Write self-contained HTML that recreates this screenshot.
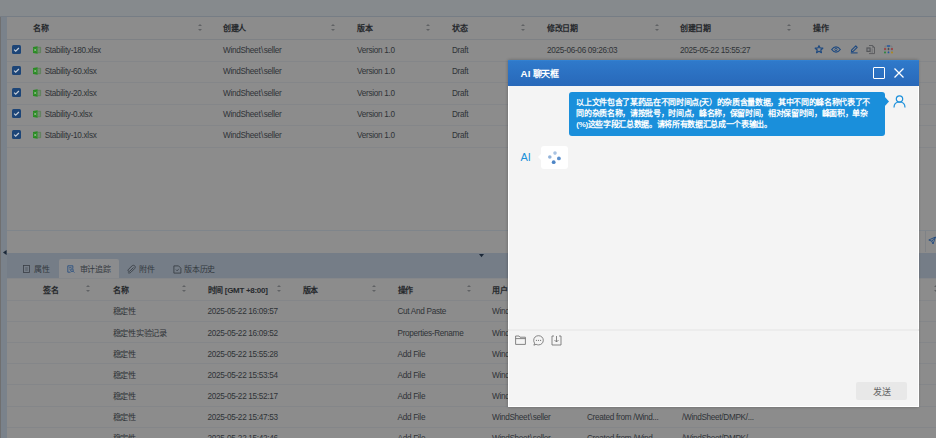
<!DOCTYPE html>
<html lang="zh-CN"><head><meta charset="utf-8">
<style>
*{box-sizing:border-box;margin:0;padding:0}
html,body{width:936px;height:438px;overflow:hidden;background:#8a8c8e;font-family:"Liberation Sans",sans-serif}
.a{position:absolute;white-space:nowrap}
svg.a{overflow:visible}
#page{position:absolute;left:0;top:0;width:936px;height:438px}
.hd{font-size:8px;font-weight:bold;color:#26292d;line-height:10px;letter-spacing:-0.3px}
.td{font-size:8.2px;color:#2f3337;line-height:10px;letter-spacing:-0.3px}
.tb{font-size:8px;color:#33383e;line-height:10px;letter-spacing:-0.35px}
.hl{position:absolute;height:1px;background:#848689}
.sort{position:absolute;width:5px;height:6.9px}
.sort:before,.sort:after{content:"";position:absolute;left:0.3px;border-left:2.2px solid transparent;border-right:2.2px solid transparent}
.sort:before{top:0;border-bottom:2.9px solid #606265}
.sort:after{bottom:0;border-top:2.9px solid #606265}
.cb{position:absolute;width:9px;height:9px;background:#1d4577;border-radius:1.5px}
.cb svg{position:absolute;left:0;top:0}
</style></head><body>
<div id="page">
<div class="a" style="left:0;top:0;width:936px;height:16px;background:#868a8d"></div>
<div class="a" style="left:0;top:16px;width:7px;height:422px;background:#7a828b"></div>
<div class="a" style="left:0;top:17px;width:1.2px;height:421px;background:#6f6f70"></div>
<div class="a" style="left:7px;top:16px;width:929px;height:237px;background:#8c8c8c"></div>
<div class="a" style="left:0;top:15.6px;width:936px;height:1.5px;background:#767d85"></div>
<div class="hl" style="left:7px;top:39px;width:929px;background:#7e8185;"></div>
<div class="hl" style="left:7px;top:61px;width:929px;"></div>
<div class="hl" style="left:7px;top:82px;width:929px;"></div>
<div class="hl" style="left:7px;top:104px;width:929px;"></div>
<div class="hl" style="left:7px;top:125px;width:929px;"></div>
<div class="hl" style="left:7px;top:147px;width:929px;"></div>
<div class="hl" style="left:7px;top:230px;width:929px;background:#7f858b;"></div>
<div class="a hd" style="left:33px;top:24.1px;">名称</div>
<div class="a hd" style="left:223px;top:24.1px;">创建人</div>
<div class="a hd" style="left:357px;top:24.1px;">版本</div>
<div class="a hd" style="left:452px;top:24.1px;">状态</div>
<div class="a hd" style="left:547px;top:24.1px;">修改日期</div>
<div class="a hd" style="left:680px;top:24.1px;">创建日期</div>
<div class="a hd" style="left:813px;top:24.1px;">操作</div>
<div class="sort" style="left:197.3px;top:24.1px"></div>
<div class="sort" style="left:330.8px;top:24.1px"></div>
<div class="sort" style="left:425.5px;top:24.1px"></div>
<div class="sort" style="left:520.3px;top:24.1px"></div>
<div class="sort" style="left:654.5px;top:24.1px"></div>
<div class="sort" style="left:787px;top:24.1px"></div>
<div class="cb" style="left:12.3px;top:45px"><svg width="9" height="9" viewBox="0 0 9 9"><path d="M2.1 4.6 L3.7 6.1 L6.9 3" fill="none" stroke="#c3cbd5" stroke-width="1.25"/></svg></div>
<svg class="a" style="left:33px;top:46px" width="8" height="8" viewBox="0 0 8 8"><path d="M4.5 1.3 H7.6 V6.7 H4.5" fill="none" stroke="#4f7f49" stroke-width="0.7"/><path d="M5.6 1.3 V6.7 M6.6 1.3 V6.7" stroke="#5f8a59" stroke-width="0.5"/><path d="M0 1 L4.6 0.2 L4.6 7.8 L0 7 Z" fill="#2a8a24"/><path d="M1.2 2.8 L3.3 5.2 M3.3 2.8 L1.2 5.2" stroke="#a8cfa4" stroke-width="0.7"/></svg>
<div class="a td" style="left:44.7px;top:45.9px;">Stability-180.xlsx</div>
<div class="a td" style="left:223px;top:45.9px;">WindShee<span style="letter-spacing:0.4px">t\</span>seller</div>
<div class="a td" style="left:357px;top:45.9px;">Version 1.0</div>
<div class="a td" style="left:452px;top:45.9px;">Draft</div>
<div class="a td" style="left:547px;top:45.9px;">2025-06-06 09:26:03</div>
<div class="a td" style="left:680px;top:45.9px;">2025-05-22 15:55:27</div>
<div class="cb" style="left:12.3px;top:66.3px"><svg width="9" height="9" viewBox="0 0 9 9"><path d="M2.1 4.6 L3.7 6.1 L6.9 3" fill="none" stroke="#c3cbd5" stroke-width="1.25"/></svg></div>
<svg class="a" style="left:33px;top:67.3px" width="8" height="8" viewBox="0 0 8 8"><path d="M4.5 1.3 H7.6 V6.7 H4.5" fill="none" stroke="#4f7f49" stroke-width="0.7"/><path d="M5.6 1.3 V6.7 M6.6 1.3 V6.7" stroke="#5f8a59" stroke-width="0.5"/><path d="M0 1 L4.6 0.2 L4.6 7.8 L0 7 Z" fill="#2a8a24"/><path d="M1.2 2.8 L3.3 5.2 M3.3 2.8 L1.2 5.2" stroke="#a8cfa4" stroke-width="0.7"/></svg>
<div class="a td" style="left:44.7px;top:67.2px;">Stability-60.xlsx</div>
<div class="a td" style="left:223px;top:67.2px;">WindShee<span style="letter-spacing:0.4px">t\</span>seller</div>
<div class="a td" style="left:357px;top:67.2px;">Version 1.0</div>
<div class="a td" style="left:452px;top:67.2px;">Draft</div>
<div class="cb" style="left:12.3px;top:87.6px"><svg width="9" height="9" viewBox="0 0 9 9"><path d="M2.1 4.6 L3.7 6.1 L6.9 3" fill="none" stroke="#c3cbd5" stroke-width="1.25"/></svg></div>
<svg class="a" style="left:33px;top:88.6px" width="8" height="8" viewBox="0 0 8 8"><path d="M4.5 1.3 H7.6 V6.7 H4.5" fill="none" stroke="#4f7f49" stroke-width="0.7"/><path d="M5.6 1.3 V6.7 M6.6 1.3 V6.7" stroke="#5f8a59" stroke-width="0.5"/><path d="M0 1 L4.6 0.2 L4.6 7.8 L0 7 Z" fill="#2a8a24"/><path d="M1.2 2.8 L3.3 5.2 M3.3 2.8 L1.2 5.2" stroke="#a8cfa4" stroke-width="0.7"/></svg>
<div class="a td" style="left:44.7px;top:88.5px;">Stability-20.xlsx</div>
<div class="a td" style="left:223px;top:88.5px;">WindShee<span style="letter-spacing:0.4px">t\</span>seller</div>
<div class="a td" style="left:357px;top:88.5px;">Version 1.0</div>
<div class="a td" style="left:452px;top:88.5px;">Draft</div>
<div class="cb" style="left:12.3px;top:109px"><svg width="9" height="9" viewBox="0 0 9 9"><path d="M2.1 4.6 L3.7 6.1 L6.9 3" fill="none" stroke="#c3cbd5" stroke-width="1.25"/></svg></div>
<svg class="a" style="left:33px;top:110px" width="8" height="8" viewBox="0 0 8 8"><path d="M4.5 1.3 H7.6 V6.7 H4.5" fill="none" stroke="#4f7f49" stroke-width="0.7"/><path d="M5.6 1.3 V6.7 M6.6 1.3 V6.7" stroke="#5f8a59" stroke-width="0.5"/><path d="M0 1 L4.6 0.2 L4.6 7.8 L0 7 Z" fill="#2a8a24"/><path d="M1.2 2.8 L3.3 5.2 M3.3 2.8 L1.2 5.2" stroke="#a8cfa4" stroke-width="0.7"/></svg>
<div class="a td" style="left:44.7px;top:109.9px;">Stability-0.xlsx</div>
<div class="a td" style="left:223px;top:109.9px;">WindShee<span style="letter-spacing:0.4px">t\</span>seller</div>
<div class="a td" style="left:357px;top:109.9px;">Version 1.0</div>
<div class="a td" style="left:452px;top:109.9px;">Draft</div>
<div class="cb" style="left:12.3px;top:130.3px"><svg width="9" height="9" viewBox="0 0 9 9"><path d="M2.1 4.6 L3.7 6.1 L6.9 3" fill="none" stroke="#c3cbd5" stroke-width="1.25"/></svg></div>
<svg class="a" style="left:33px;top:131.3px" width="8" height="8" viewBox="0 0 8 8"><path d="M4.5 1.3 H7.6 V6.7 H4.5" fill="none" stroke="#4f7f49" stroke-width="0.7"/><path d="M5.6 1.3 V6.7 M6.6 1.3 V6.7" stroke="#5f8a59" stroke-width="0.5"/><path d="M0 1 L4.6 0.2 L4.6 7.8 L0 7 Z" fill="#2a8a24"/><path d="M1.2 2.8 L3.3 5.2 M3.3 2.8 L1.2 5.2" stroke="#a8cfa4" stroke-width="0.7"/></svg>
<div class="a td" style="left:44.7px;top:131.2px;">Stability-10.xlsx</div>
<div class="a td" style="left:223px;top:131.2px;">WindShee<span style="letter-spacing:0.4px">t\</span>seller</div>
<div class="a td" style="left:357px;top:131.2px;">Version 1.0</div>
<div class="a td" style="left:452px;top:131.2px;">Draft</div>
<svg class="a" style="left:813.5px;top:45px" width="10" height="8.5" viewBox="0 0 10 8.5"><path d="M5 0.7 L6.1 3 L8.8 3.2 L6.8 4.9 L7.4 7.7 L5 6.3 L2.6 7.7 L3.2 4.9 L1.2 3.2 L3.9 3 Z" fill="none" stroke="#1f4a80" stroke-width="1.25" stroke-linejoin="round"/></svg>
<svg class="a" style="left:831.3px;top:45.8px" width="10" height="7" viewBox="0 0 10 7"><path d="M0.7 3.5 C2.2 1.4 3.6 0.8 5 0.8 C6.4 0.8 7.8 1.4 9.3 3.5 C7.8 5.6 6.4 6.2 5 6.2 C3.6 6.2 2.2 5.6 0.7 3.5 Z" fill="none" stroke="#1f4a80" stroke-width="1.2"/><circle cx="5" cy="3.5" r="1.2" fill="none" stroke="#1f4a80" stroke-width="0.9"/></svg>
<svg class="a" style="left:849.5px;top:45px" width="9" height="9" viewBox="0 0 9 9"><path d="M1.5 6.6 L1.5 5.2 L5.8 0.9 L7.2 2.3 L2.9 6.6 Z" fill="none" stroke="#1f4a80" stroke-width="1.1" stroke-linejoin="round"/><path d="M0.8 7.9 H7.6" stroke="#1f4a80" stroke-width="1.1"/></svg>
<svg class="a" style="left:866px;top:44.8px" width="9" height="9" viewBox="0 0 9 9"><path d="M3 0.5 H6.6 L8.5 2.4 V8.6 H3" fill="none" stroke="#505256" stroke-width="0.8"/><path d="M6.6 0.5 V2.4 H8.5" fill="none" stroke="#505256" stroke-width="0.6"/><path d="M5 3.2 V8 M6.5 3.5 V8" stroke="#65676a" stroke-width="0.5"/><rect x="0.4" y="2.4" width="4.2" height="4.6" fill="#55575a"/><rect x="1.5" y="3.6" width="2" height="2.2" fill="#85878a"/></svg>
<svg class="a" style="left:884px;top:45px" width="9" height="8.5" viewBox="0 0 9 8.5"><path d="M4.5 1.2 V7.4 M1 4.1 H8 M1 4.1 V7.4 M8 4.1 V7.4 M3 1 H1 V4.1 M6 1 H8 V4.1" fill="none" stroke="#6a6f78" stroke-width="0.45"/><rect x="2.9" y="0.2" width="3.2" height="1.6" rx="0.5" fill="#1f55a0"/><circle cx="1" cy="4.1" r="1" fill="#a13838"/><circle cx="8" cy="4.1" r="1" fill="#a13838"/><path d="M4.5 3.1 L5.5 4.1 L4.5 5.1 L3.5 4.1 Z" fill="#3a3d42"/><circle cx="1" cy="7.4" r="1" fill="#2a8a3a"/><circle cx="4.5" cy="7.4" r="0.9" fill="#1f55a0"/><circle cx="8" cy="7.4" r="1" fill="#b08a1a"/></svg>
<div class="a" style="left:925px;top:231px;width:1px;height:21px;background:#7f8286"></div>
<svg class="a" style="left:928px;top:236px" width="8" height="9" viewBox="0 0 8 9"><path d="M0.8 4 L7.5 1 L5 8 L3.8 5.2 Z M3.8 5.2 L7.5 1" fill="none" stroke="#1f4a80" stroke-width="0.9"/></svg>
<div class="a" style="left:7px;top:253px;width:929px;height:25px;background:#757d87"></div>
<div class="a" style="left:58.7px;top:258.8px;width:60.6px;height:19.2px;background:#8b8c8e;border-radius:2px 2px 0 0"></div>
<svg class="a" style="left:2.5px;top:249.5px" width="4" height="5" viewBox="0 0 4 5"><path d="M3.6 0 V5 L0 2.5 Z" fill="#1b2838"/></svg>
<svg class="a" style="left:478.8px;top:253.8px" width="5" height="3.5" viewBox="0 0 5 3.5"><path d="M0 0 H5 L2.5 3.2 Z" fill="#1b2838"/></svg>
<div class="a tb" style="left:34.4px;top:265px;">属性</div>
<div class="a tb" style="left:79.6px;top:265px;">审计追踪</div>
<div class="a tb" style="left:139.4px;top:265px;">附件</div>
<div class="a tb" style="left:184.4px;top:265px;">版本历史</div>
<svg class="a" style="left:22.8px;top:265px" width="7" height="8" viewBox="0 0 7 8"><rect x="0.45" y="0.45" width="6.1" height="7.1" fill="none" stroke="#3a3f46" stroke-width="0.8"/><path d="M2.2 3 H4.8 M2.2 5 H4.8" stroke="#3a3f46" stroke-width="0.6"/></svg>
<svg class="a" style="left:67.4px;top:264.8px" width="8" height="8" viewBox="0 0 9 9"><path d="M6.6 4 V0.9 H0.9 V8.1 H4" fill="none" stroke="#1f4a80" stroke-width="0.9"/><path d="M2.4 2.8 H5 M2.4 4.6 H3.8" stroke="#1f4a80" stroke-width="0.7"/><circle cx="5.6" cy="5.8" r="1.5" fill="none" stroke="#1f4a80" stroke-width="0.9"/><path d="M6.7 6.9 L8.3 8.5" stroke="#1f4a80" stroke-width="0.9"/></svg>
<svg class="a" style="left:127.3px;top:264.5px" width="9" height="9" viewBox="0 0 9 9"><path d="M6.5 2.5 L3 6 C2.4 6.6 1.6 6.6 1.2 6.1 C0.8 5.6 0.9 4.9 1.4 4.4 L5 0.9 C5.9 0.1 7.1 0.1 7.8 0.9 C8.5 1.7 8.4 2.8 7.6 3.6 L4 7.2 C3 8.2 1.6 8.2 0.9 7.5" fill="none" stroke="#3a3f46" stroke-width="0.9"/></svg>
<svg class="a" style="left:172.5px;top:264.5px" width="9" height="9" viewBox="0 0 9 9"><path d="M0.9 0.9 H5.6 L7.9 3.2 V8.1 H0.9 Z" fill="none" stroke="#3a3f46" stroke-width="0.9"/><path d="M2.8 4.5 L4.2 6 L5.8 3.8" fill="none" stroke="#3a3f46" stroke-width="0.7"/></svg>
<div class="a" style="left:7px;top:278px;width:929px;height:160px;background:#8c8c8c"></div>
<div class="hl" style="left:7px;top:278px;width:929px;background:#85878a;"></div>
<div class="hl" style="left:7px;top:300px;width:929px;"></div>
<div class="a hd" style="left:43px;top:286px;">签名</div>
<div class="a hd" style="left:113px;top:286px;">名称</div>
<div class="a hd" style="left:207.5px;top:286px;">时间 [GMT +8:00]</div>
<div class="a hd" style="left:302.5px;top:286px;">版本</div>
<div class="a hd" style="left:397.5px;top:286px;">操作</div>
<div class="a hd" style="left:492px;top:286px;">用户</div>
<div class="sort" style="left:85.9px;top:285.4px"></div>
<div class="sort" style="left:181.9px;top:285.4px"></div>
<div class="sort" style="left:276.4px;top:285.4px"></div>
<div class="sort" style="left:371.4px;top:285.4px"></div>
<div class="sort" style="left:466.4px;top:285.4px"></div>
<div class="sort" style="left:934px;top:285.4px"></div>
<div class="a td" style="left:112.8px;top:307.4px;">稳定性</div>
<div class="a td" style="left:207.5px;top:307.4px;">2025-05-22 16:09:57</div>
<div class="a td" style="left:397.5px;top:307.4px;">Cut And Paste</div>
<div class="a td" style="left:492px;top:307.4px;">WindShee<span style="letter-spacing:0.4px">t\</span>seller</div>
<div class="a td" style="left:587px;top:307.4px;">Created from /Wind...</div>
<div class="a td" style="left:682px;top:307.4px;">/WindSheet/DMPK/...</div>
<div class="hl" style="left:7px;top:321.1px;width:929px;"></div>
<div class="a td" style="left:112.8px;top:328.5px;">稳定性实验记录</div>
<div class="a td" style="left:207.5px;top:328.5px;">2025-05-22 16:09:52</div>
<div class="a td" style="left:397.5px;top:328.5px;">Properties-Rename</div>
<div class="a td" style="left:492px;top:328.5px;">WindShee<span style="letter-spacing:0.4px">t\</span>seller</div>
<div class="a td" style="left:587px;top:328.5px;">Created from /Wind...</div>
<div class="a td" style="left:682px;top:328.5px;">/WindSheet/DMPK/...</div>
<div class="hl" style="left:7px;top:342.2px;width:929px;"></div>
<div class="a td" style="left:112.8px;top:349.59999999999997px;">稳定性</div>
<div class="a td" style="left:207.5px;top:349.59999999999997px;">2025-05-22 15:55:28</div>
<div class="a td" style="left:397.5px;top:349.59999999999997px;">Add File</div>
<div class="a td" style="left:492px;top:349.59999999999997px;">WindShee<span style="letter-spacing:0.4px">t\</span>seller</div>
<div class="a td" style="left:587px;top:349.59999999999997px;">Created from /Wind...</div>
<div class="a td" style="left:682px;top:349.59999999999997px;">/WindSheet/DMPK/...</div>
<div class="hl" style="left:7px;top:363.3px;width:929px;"></div>
<div class="a td" style="left:112.8px;top:370.7px;">稳定性</div>
<div class="a td" style="left:207.5px;top:370.7px;">2025-05-22 15:53:54</div>
<div class="a td" style="left:397.5px;top:370.7px;">Add File</div>
<div class="a td" style="left:492px;top:370.7px;">WindShee<span style="letter-spacing:0.4px">t\</span>seller</div>
<div class="a td" style="left:587px;top:370.7px;">Created from /Wind...</div>
<div class="a td" style="left:682px;top:370.7px;">/WindSheet/DMPK/...</div>
<div class="hl" style="left:7px;top:384.4px;width:929px;"></div>
<div class="a td" style="left:112.8px;top:391.79999999999995px;">稳定性</div>
<div class="a td" style="left:207.5px;top:391.79999999999995px;">2025-05-22 15:52:17</div>
<div class="a td" style="left:397.5px;top:391.79999999999995px;">Add File</div>
<div class="a td" style="left:492px;top:391.79999999999995px;">WindShee<span style="letter-spacing:0.4px">t\</span>seller</div>
<div class="a td" style="left:587px;top:391.79999999999995px;">Created from /Wind...</div>
<div class="a td" style="left:682px;top:391.79999999999995px;">/WindSheet/DMPK/...</div>
<div class="hl" style="left:7px;top:405.5px;width:929px;"></div>
<div class="a td" style="left:112.8px;top:412.9px;">稳定性</div>
<div class="a td" style="left:207.5px;top:412.9px;">2025-05-22 15:47:53</div>
<div class="a td" style="left:397.5px;top:412.9px;">Add File</div>
<div class="a td" style="left:492px;top:412.9px;">WindShee<span style="letter-spacing:0.4px">t\</span>seller</div>
<div class="a td" style="left:587px;top:412.9px;">Created from /Wind...</div>
<div class="a td" style="left:682px;top:412.9px;">/WindSheet/DMPK/...</div>
<div class="hl" style="left:7px;top:426.6px;width:929px;"></div>
<div class="a td" style="left:112.8px;top:434.0px;">稳定性</div>
<div class="a td" style="left:207.5px;top:434.0px;">2025-05-22 15:42:46</div>
<div class="a td" style="left:397.5px;top:434.0px;">Add File</div>
<div class="a td" style="left:492px;top:434.0px;">WindShee<span style="letter-spacing:0.4px">t\</span>seller</div>
<div class="a td" style="left:587px;top:434.0px;">Created from /Wind...</div>
<div class="a td" style="left:682px;top:434.0px;">/WindSheet/DMPK/...</div>
</div>
<div class="a" style="left:507.5px;top:60.2px;width:410.8px;height:346.5px;background:#f4f4f4;box-shadow:0 0 3px rgba(0,0,0,0.3)">
  <div class="a" style="left:0;top:25px;width:411px;height:321.5px;border:1px solid #fff;border-top:0"></div>
  <div class="a" style="left:0;top:0;width:411px;height:25.7px;background:linear-gradient(#3584d4 0,#2f79ca 1.5px,#2868b9 100%)"></div>
  <div class="a" style="left:13.1px;top:7.6px;font-size:9px;font-weight:bold;color:#fff;line-height:12px;letter-spacing:-0.25px"><span style="font-size:9.8px;letter-spacing:0">AI</span> 聊天框</div>
  <div class="a" style="left:365.5px;top:7px;width:11.5px;height:11.5px;border:1.3px solid #fff;border-radius:1px"></div>
  <svg class="a" style="left:386.5px;top:8px" width="10" height="10" viewBox="0 0 10 10"><path d="M0.5 0.5 L9.5 9.5 M9.5 0.5 L0.5 9.5" stroke="#fff" stroke-width="1.3"/></svg>
  <!-- user bubble -->
  <div class="a" style="left:61.0px;top:31.5px;width:316px;height:44px;background:#1a8fdb;border-radius:3px"></div>
  <svg class="a" style="left:376.5px;top:36px" width="6" height="11" viewBox="0 0 6 11"><path d="M0 0 L5 5.5 L0 11 Z" fill="#1a8fdb"/></svg>
  <div class="a" style="left:68.8px;top:37px;font-size:8px;letter-spacing:-0.33px;line-height:11px;color:#fff;font-weight:bold">以上文件包含了某药品在不同时间点(天）的杂质含量数据，其中不同的峰名称代表了不<br>同的杂质名称，请按批号，时间点，峰名称，保留时间，相对保留时间，峰面积，单杂<br>(%)这些字段汇总数据。请将所有数据汇总成一个表输出。</div>
  <svg class="a" style="left:385.5px;top:35px" width="13" height="13" viewBox="0 0 13 13"><circle cx="6.5" cy="4" r="3.2" fill="none" stroke="#1a8fdb" stroke-width="1.2"/><path d="M1 12.5 C1 8.5 3.5 7 6.5 7 C9.5 7 12 8.5 12 12.5" fill="none" stroke="#1a8fdb" stroke-width="1.2"/></svg>
  <!-- AI reply -->
  <div class="a" style="left:13.0px;top:91px;font-size:11px;line-height:12px;color:#2090d8">AI</div>
  <div class="a" style="left:33.5px;top:86px;width:26.5px;height:23px;background:#fff;border-radius:3px"></div>
  <svg class="a" style="left:30.0px;top:93px" width="4" height="8" viewBox="0 0 4 8"><path d="M4 0 L0 4 L4 8 Z" fill="#fff"/></svg>
  <svg class="a" style="left:33.5px;top:86px" width="26" height="23" viewBox="0 0 26 23"><circle cx="14" cy="7.1" r="1.8" fill="#a9c3e2"/><circle cx="8.8" cy="11" r="1.8" fill="#94b4da"/><circle cx="17.9" cy="12.4" r="1.9" fill="#5d91cd"/><circle cx="12.7" cy="16.2" r="1.9" fill="#4d85c6"/></svg>
  <!-- separator and tools -->
  <div class="a" style="left:0;top:269.2px;width:411px;height:1.6px;background:#ececec"></div>
  <svg class="a" style="left:7.5px;top:275px" width="11" height="10" viewBox="0 0 11 10"><path d="M0.6 1 H4 L5 2.2 H10.4 V9.4 H0.6 Z M0.6 3.6 H10.4" fill="none" stroke="#707070" stroke-width="0.85"/></svg>
  <svg class="a" style="left:25.5px;top:274.5px" width="11" height="11" viewBox="0 0 11 11"><path d="M5.5 0.7 C8.3 0.7 10.3 2.7 10.3 5.3 C10.3 7.9 8.3 9.9 5.5 9.9 C4.6 9.9 3.8 9.7 3.1 9.3 L0.9 10.2 L1.6 8.2 C1 7.4 0.7 6.4 0.7 5.3 C0.7 2.7 2.7 0.7 5.5 0.7 Z" fill="none" stroke="#707070" stroke-width="0.85"/><circle cx="3.4" cy="5.3" r="0.6" fill="#707070"/><circle cx="5.5" cy="5.3" r="0.6" fill="#707070"/><circle cx="7.6" cy="5.3" r="0.6" fill="#707070"/></svg>
  <svg class="a" style="left:43.5px;top:274.5px" width="11" height="11" viewBox="0 0 11 11"><path d="M3 1 H1 V10 H10 V1 H8" fill="none" stroke="#707070" stroke-width="0.85"/><path d="M5.5 1 V7 M3.5 5 L5.5 7 L7.5 5" fill="none" stroke="#707070" stroke-width="0.85"/></svg>
  <!-- send -->
  <div class="a" style="left:348.5px;top:322px;width:51px;height:18px;background:#e8e8e8;border-radius:2px;font-size:9px;line-height:20px;text-align:center;color:#666">发送</div>
</div>
</body></html>
